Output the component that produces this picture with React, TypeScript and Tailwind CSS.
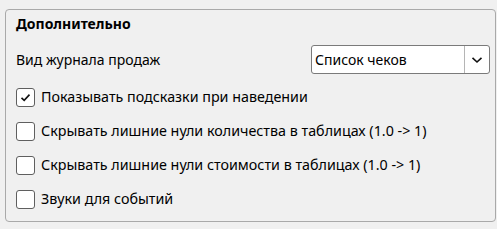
import React from "react";

const font = { fontFamily: '"Noto Sans", "Open Sans", sans-serif' };

const CheckBox: React.FC<{ checked?: boolean }> = ({ checked }) => (
  <div className="w-[19px] h-[19px] rounded-[3px] border border-[#5f5f5f] bg-white flex items-center justify-center shrink-0">
    {checked && (
      <svg width="13" height="13" viewBox="0 0 13 13">
        <path d="M2.5 6.8 L5.2 9.4 L10.5 3.6" fill="none" stroke="#111" strokeWidth="1.6" />
      </svg>
    )}
  </div>
);

const CheckRow: React.FC<{ label: string; checked?: boolean }> = ({ label, checked }) => (
  <div className="h-[34px] flex items-center gap-[6px]">
    <CheckBox checked={checked} />
    <span className="text-[14.3px] text-black leading-none">{label}</span>
  </div>
);

export default function App() {
  return (
    <div className="w-[497px] h-[229px] bg-[#f0f0f0] pt-[9px] pl-[5px]" style={font}>
      <div className="w-[491px] h-[213px] border border-[#a9a9a9] rounded-[4px] pl-[10px] pr-[5px]">
        <div className="h-[27px] flex items-center text-[14px] font-bold text-black">Дополнительно</div>
        <div className="mt-[8px] h-[29px] flex items-center justify-between">
          <span className="text-[14px] text-black">Вид журнала продаж</span>
          <div className="w-[179px] h-[29px] border border-[#7a7a7a] rounded-[3px] bg-white flex items-stretch">
            <div className="flex-1 flex items-center pl-[3px] text-[14px] text-black">Список чеков</div>
            <div className="w-[25px] border-l border-[#b5b5b5] flex items-center justify-center">
              <svg width="12" height="8" viewBox="0 0 12 8">
                <path d="M1.5 1.8 L6 6 L10.5 1.8" fill="none" stroke="#111" strokeWidth="1.6" />
              </svg>
            </div>
          </div>
        </div>
        <div className="mt-[6px]">
          <CheckRow label="Показывать подсказки при наведении" checked />
          <CheckRow label="Скрывать лишние нули количества в таблицах (1.0 -> 1)" />
          <CheckRow label="Скрывать лишние нули стоимости в таблицах (1.0 -> 1)" />
          <CheckRow label="Звуки для событий" />
        </div>
      </div>
    </div>
  );
}
